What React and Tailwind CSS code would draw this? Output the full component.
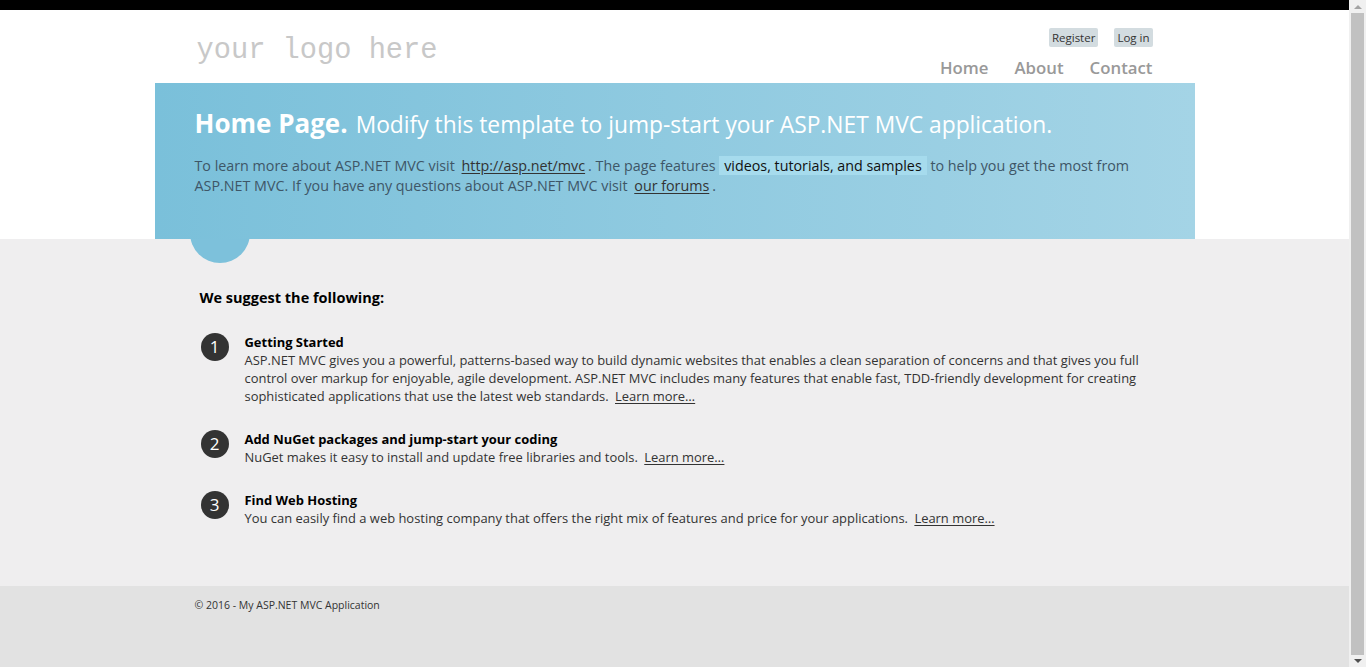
import React from 'react';

const font = { fontFamily: '"Open Sans", "Noto Sans", sans-serif' };

const steps = [
  {
    title: 'Getting Started',
    text: 'ASP.NET MVC gives you a powerful, patterns-based way to build dynamic websites that enables a clean separation of concerns and that gives you full control over markup for enjoyable, agile development. ASP.NET MVC includes many features that enable fast, TDD-friendly development for creating sophisticated applications that use the latest web standards.',
  },
  {
    title: 'Add NuGet packages and jump-start your coding',
    text: 'NuGet makes it easy to install and update free libraries and tools.',
  },
  {
    title: 'Find Web Hosting',
    text: 'You can easily find a web hosting company that offers the right mix of features and price for your applications.',
  },
];

const Link = ({ children }) => (
  <a href="#" className="px-[3px] text-[#333] underline underline-offset-2">
    {children}
  </a>
);

const Scrollbar = () => (
  <div className="flex w-[17px] flex-col items-center bg-[#f0f0f0]">
    <div className="flex h-[13px] items-center justify-center">
      <div className="h-0 w-0 border-x-[4px] border-b-[4px] border-x-transparent border-b-[#a3a3a3]" />
    </div>
    <div className="w-[13px] flex-1 bg-[#c1c1c1]" />
    <div className="flex h-[12px] items-center justify-center">
      <div className="h-0 w-0 border-x-[4px] border-t-[4px] border-x-transparent border-t-[#505050]" />
    </div>
  </div>
);

export default function App() {
  return (
    <div className="flex h-[667px] w-[1366px] overflow-hidden" style={font}>
      <div className="flex w-[1349px] flex-col bg-white">
        <div className="h-[10px] bg-black" />

        {/* header */}
        <header className="mx-auto flex h-[73px] w-[960px] justify-between">
          <div
            className="pt-[21px] pl-[2px] text-[28.7px] leading-[40px] text-[#c8c8c8]"
            style={{ fontFamily: '"Liberation Mono", "DejaVu Sans Mono", monospace' }}
          >
            your logo here
          </div>
          <div className="flex flex-col items-end pt-[18px] pr-[2px]">
            <div className="flex gap-[16px] text-[11.5px] leading-[15px] text-[#333]">
              <a href="#" className="rounded-[2px] bg-[#d3dce0] px-[3px] py-[2px]">Register</a>
              <a href="#" className="rounded-[2px] bg-[#d3dce0] px-[3px] py-[2px]">Log in</a>
            </div>
            <nav className="mt-[10px] flex gap-[26px] text-[16.8px] font-semibold leading-[22px] text-[#999]">
              <a href="#">Home</a>
              <a href="#">About</a>
              <a href="#">Contact</a>
            </nav>
          </div>
        </header>

        {/* featured */}
        <section className="mx-auto h-[156px] w-[1040px] bg-gradient-to-r from-[#7ac0da] to-[#a4d4e6] px-[40px] pt-[23px]">
          <h1 className="flex items-baseline gap-[8px] leading-[34px] text-white">
            <span className="text-[26px] font-bold">Home Page.</span>
            <span className="text-[22.8px]">Modify this template to jump-start your ASP.NET MVC application.</span>
          </h1>
          <p className="mt-[14px] text-[14.3px] leading-[20px] text-[#3e5667]">
            To learn more about ASP.NET MVC visit <Link>http://asp.net/mvc</Link>. The page features{' '}
            <mark className="bg-[#a6dbed] px-[5px] text-[#111]">videos, tutorials, and samples</mark> to help you get the most
            from ASP.NET MVC. If you have any questions about ASP.NET MVC visit <Link>our forums</Link>.
          </p>
        </section>

        {/* main */}
        <main className="flex-1 bg-[#efeeef]">
          <div className="mx-auto w-[1040px] px-[35px]">
            <div className="h-[24px] w-[60px] overflow-hidden">
              <div className="-mt-[36px] h-[60px] w-[60px] rounded-full bg-[#7dc1db]" />
            </div>
            <h3 className="mt-[24px] pl-[10px] text-[14.5px] font-bold leading-[22px] text-black">
              We suggest the following:
            </h3>
            <ol className="mt-[24px] flex flex-col gap-[25px] pl-[11px]">
              {steps.map((s, i) => (
                <li key={s.title} className="flex items-start gap-[16px]">
                  <div className="flex h-[28px] w-[28px] shrink-0 items-center justify-center rounded-full bg-[#333] text-[17px] text-white">
                    {i + 1}
                  </div>
                  <div className="text-[12.95px] leading-[18px] text-[#333]">
                    <h5 className="font-bold text-black">{s.title}</h5>
                    <p>
                      {s.text} <Link>Learn more…</Link>
                    </p>
                  </div>
                </li>
              ))}
            </ol>
          </div>
        </main>

        {/* footer */}
        <footer className="h-[81px] bg-[#e2e2e2]">
          <div className="mx-auto w-[960px] pt-[11px] text-[10.5px] leading-[16px] text-[#333]">
            © 2016 - My ASP.NET MVC Application
          </div>
        </footer>
      </div>
      <Scrollbar />
    </div>
  );
}
